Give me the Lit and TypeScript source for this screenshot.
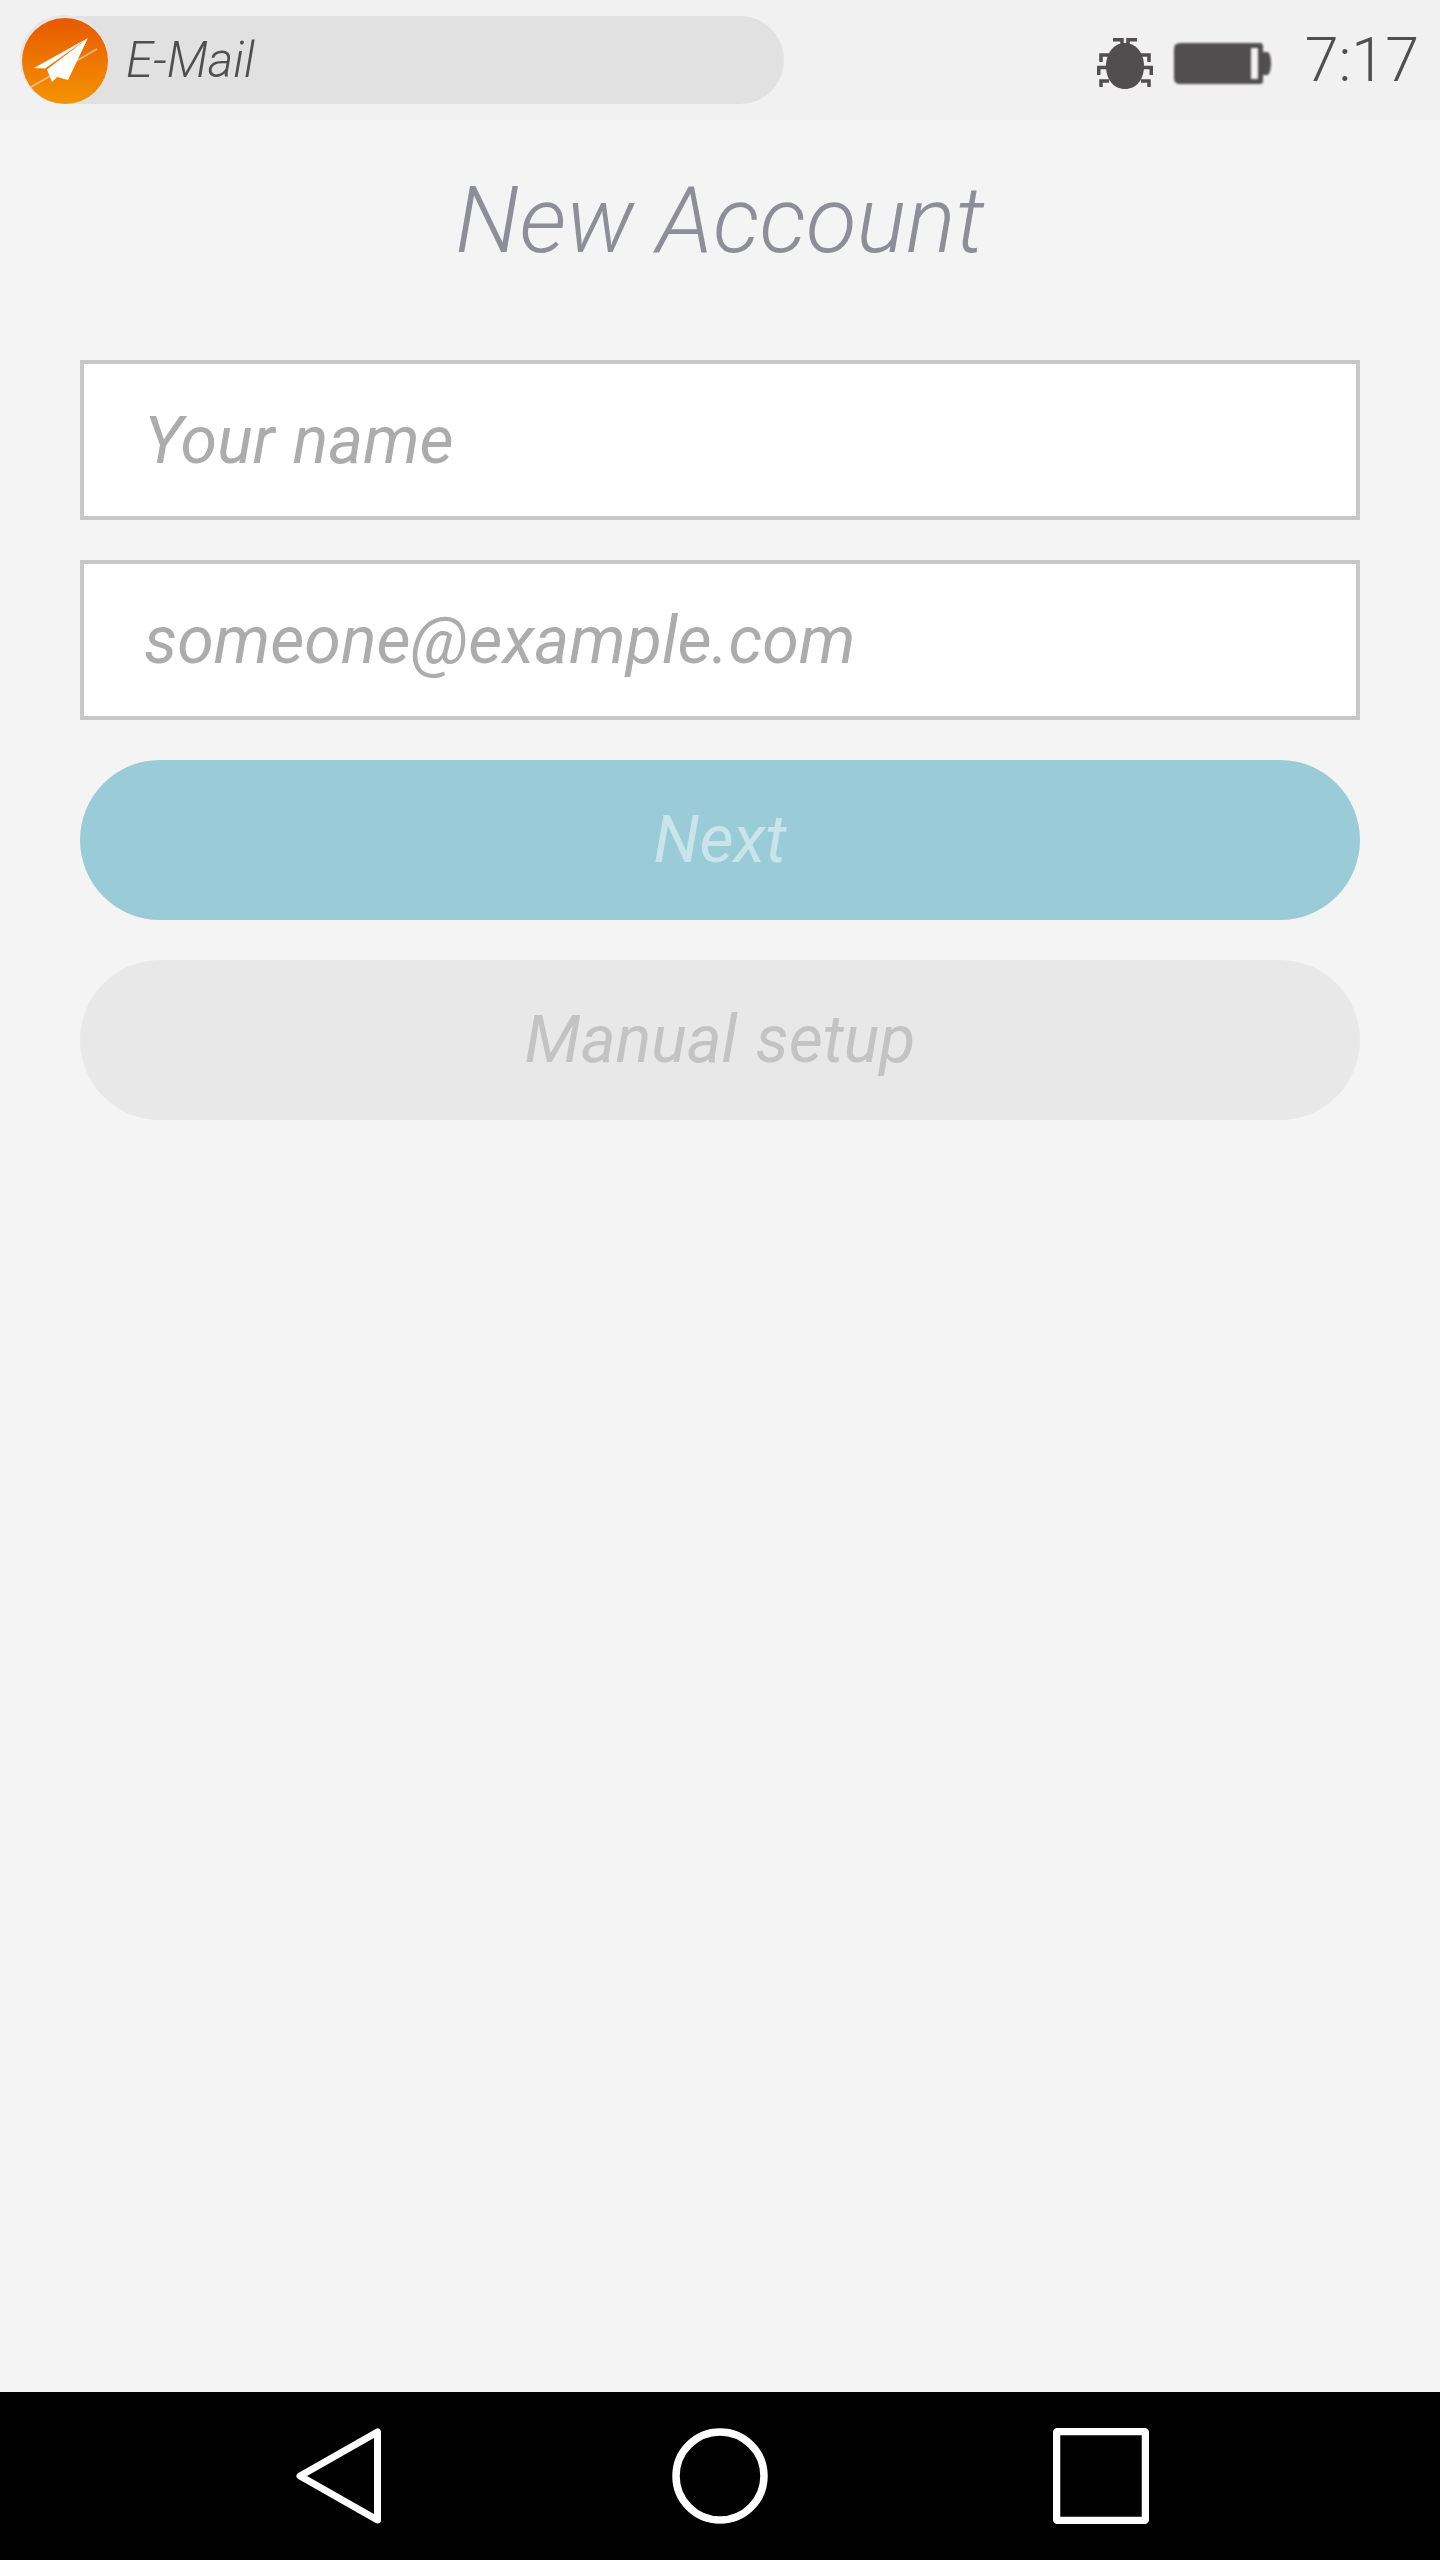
import { LitElement, css, html } from 'lit';
import { customElement } from 'lit/decorators.js';

@customElement('app-root')
export class AppRoot extends LitElement {
    render() {
        return html`
        <div class="status">
            <div class="app-pill">
                <svg class="logo" viewBox="0 0 90 90" width="90" height="90">
                    <defs>
                        <linearGradient id="orange" x1="0" y1="0" x2="0" y2="1">
                            <stop offset="0" stop-color="#e65a00"></stop>
                            <stop offset="1" stop-color="#f59300"></stop>
                        </linearGradient>
                    </defs>
                    <circle cx="44" cy="44" r="44" fill="#e6e6e6"></circle>
                    <circle cx="45" cy="46" r="43" fill="url(#orange)"></circle>
                    <path d="M11 72 L77 34" stroke="#ffc9a0" stroke-width="1.6" fill="none" opacity="0.8"></path>
                    <path d="M68 23 L14 53 L25 53.500 Z" fill="#fff"></path>
                    <path d="M68 23 L27 54.500 L32 67 L37 62 L48 65 Z" fill="#fff"></path>
                </svg>
                <span class="app-name">E-Mail</span>
            </div>
            <div class="tray">
                <svg class="bug" viewBox="0 0 56 51" width="56" height="51">
                    <path d="M9 28 C9 15 17 5 28 5 C39 5 47 15 47 28 C47 42 39 51 28 51 C17 51 9 42 9 28 Z" fill="#504e4f"></path>
                    <path d="M16 1.750 H25 V9 M40 1.750 H31 V9 M4 24 V17 H12 M52 24 V17 H44 M1.750 37 V29.500 H10 M54.250 37 V29.500 H46 M4 49 V43 H12 M52 49 V43 H44" fill="none" stroke="#504e4f" stroke-width="3.500"></path>
                </svg>
                <svg class="battery" viewBox="0 0 99 41" width="99" height="41">
                    <path d="M8 0 H88 Q91 0 91 3 V9 H96 Q99 12 99 20 Q99 29 96 32 H91 V38 Q91 41 88 41 H8 Q2 41 2 35 V6 Q2 0 8 0 Z" fill="#504e4f"></path>
                    <rect x="79" y="5" width="7" height="31" fill="#f1f1f1"></rect>
                </svg>
                <span class="clock">7:17</span>
            </div>
        </div>

        <main>
            <h1>New Account</h1>
            <input class="field" type="text" placeholder="Your name" />
            <input class="field" type="text" placeholder="someone@example.com" />
            <button class="btn next">Next</button>
            <button class="btn manual">Manual setup</button>
        </main>

        <nav>
            <svg viewBox="0 0 96 96" width="96" height="96">
                <path d="M81.500 4 V92 L4 48 Z" fill="none" stroke="#fff" stroke-width="7" stroke-linejoin="round"></path>
            </svg>
            <svg viewBox="0 0 96 96" width="96" height="96">
                <circle cx="48" cy="48" r="44" fill="none" stroke="#fff" stroke-width="7.500"></circle>
            </svg>
            <svg viewBox="0 0 96 96" width="96" height="96">
                <rect x="3.500" y="3.500" width="89" height="89" rx="1.500" fill="none" stroke="#fff" stroke-width="7.500"></rect>
            </svg>
        </nav>
        `;
    }

    static styles = css`
        :host{
            display: flex;
            flex-direction: column;
            width: 1440px;
            height: 2560px;
            background: #f4f4f4;
            font-family: Roboto, sans-serif;
        }

        .status{
            display: flex;
            justify-content: space-between;
            align-items: center;
            height: 120px;
            padding: 0 21px 0 20px;
            background: #f1f1f1;
            box-sizing: border-box;
        }

        .app-pill{
            display: flex;
            align-items: center;
            gap: 16px;
            width: 764px;
            height: 88px;
            border-radius: 44px;
            background: #e1e1e1;
        }
        .logo{
            flex: none;
        }
        .app-name{
            font-size: 49px;
            font-weight: 300;
            font-style: italic;
            color: #4f4f4f;
        }

        .tray{
            display: flex;
            align-items: center;
        }
        .bug{
            margin-right: 19px;
            margin-top: 7px;
        }
        .battery{
            margin-right: 34px;
            margin-top: 7px;
            filter: blur(1.2px);
        }
        .clock{
            font-size: 61px;
            font-weight: 300;
            color: #4f4f4f;
        }

        main{
            flex: 1;
            display: flex;
            flex-direction: column;
            gap: 40px;
            padding: 0 80px;
        }

        h1{
            height: 200px;
            margin: 0;
            font-size: 93px;
            font-weight: 300;
            font-style: italic;
            line-height: 202px;
            text-align: center;
            color: #8e8e99;
        }

        .field{
            display: block;
            height: 160px;
            box-sizing: border-box;
            padding: 0 0 1px 60px;
            border: 4px solid #c8c8c8;
            border-radius: 0;
            background: #fff;
            font-family: inherit;
            font-size: 66.3px;
            font-style: italic;
            word-spacing: 2px;
            outline: none;
        }
        .field::placeholder{
            color: #acacac;
            opacity: 1;
        }

        .btn{
            display: block;
            height: 160px;
            padding: 0 0 2px;
            border: none;
            border-radius: 80px;
            font-family: inherit;
            font-size: 66.3px;
            font-style: italic;
            word-spacing: 2px;
        }
        .next{
            background: #99ccd6;
            color: #c9e4ea;
        }
        .manual{
            background: #e8e8e8;
            color: #c3c3c3;
        }

        nav{
            display: flex;
            align-items: center;
            flex: none;
            height: 168px;
            padding-left: 296px;
            box-sizing: border-box;
            background: #000;
        }
        nav svg:nth-child(1){
            margin-right: 280px;
        }
        nav svg:nth-child(2){
            margin-right: 285px;
        }
    `;
}
